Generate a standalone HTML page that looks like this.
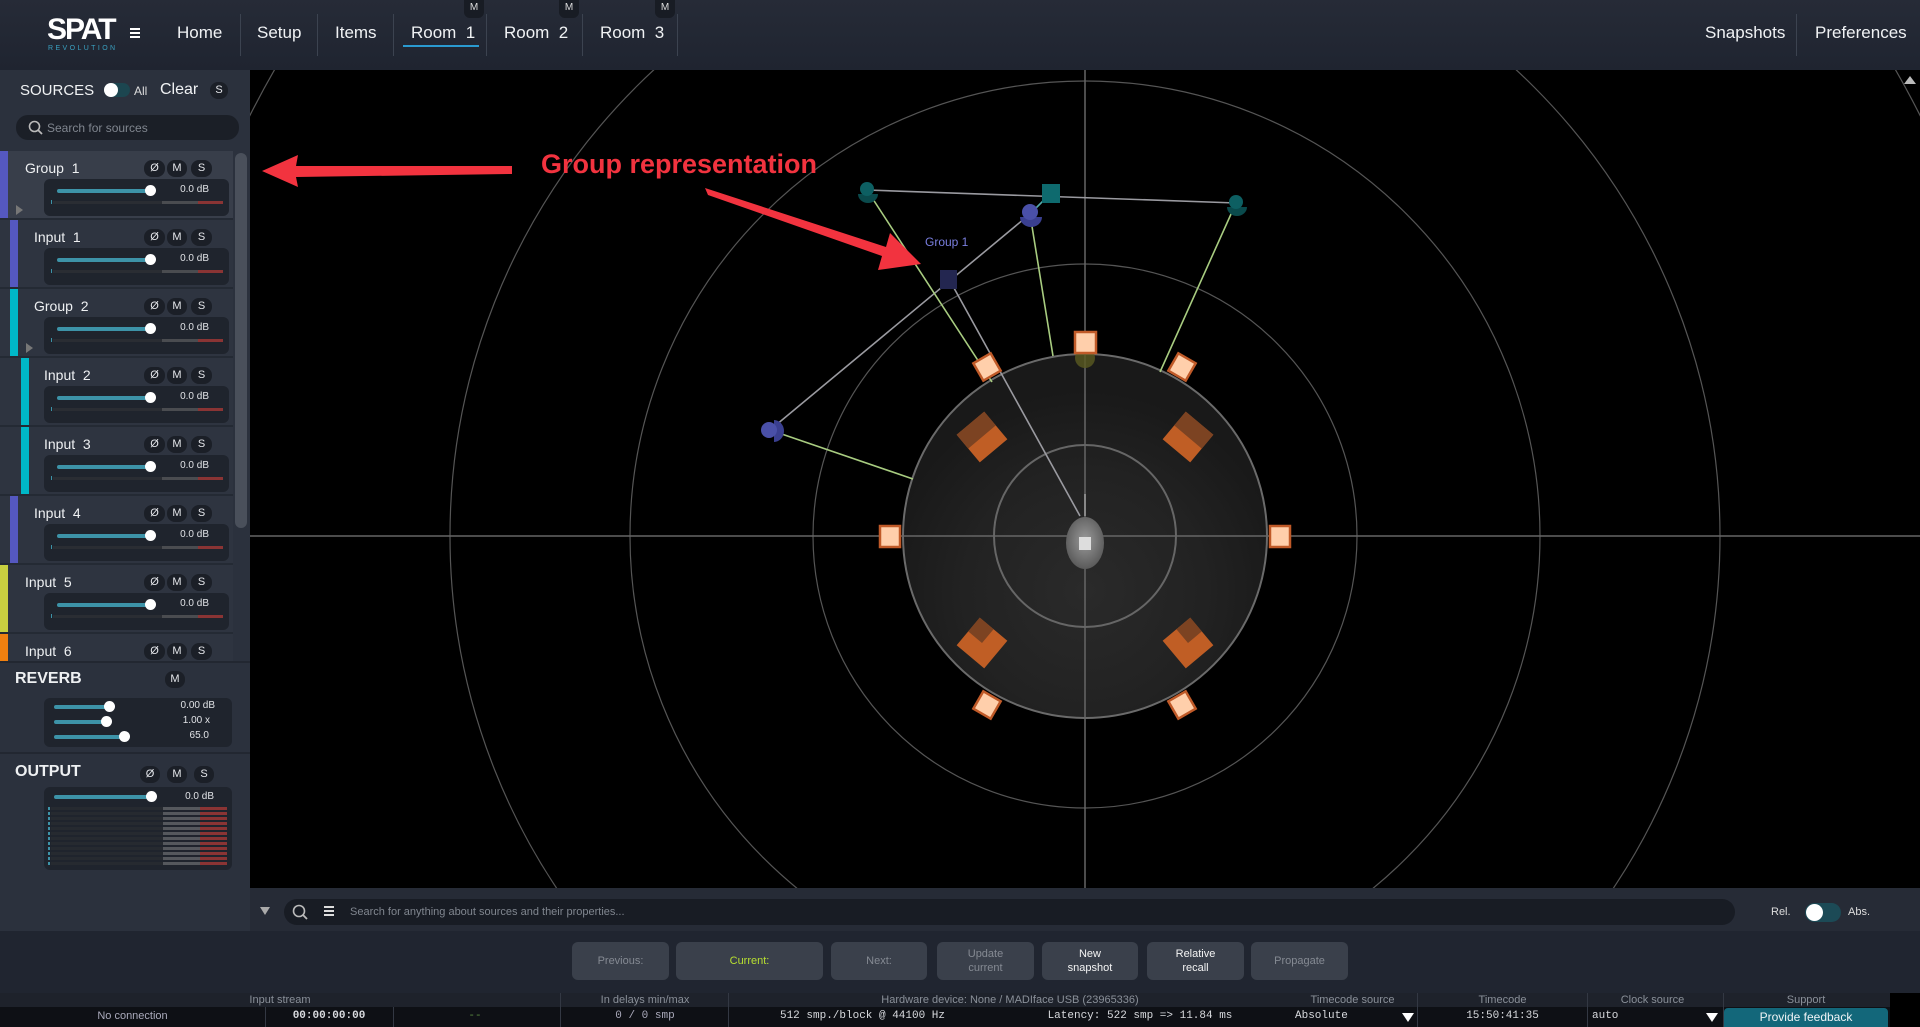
<!DOCTYPE html>
<html style="overflow:hidden"><head><meta charset="utf-8">
<style>
*{box-sizing:border-box;margin:0;padding:0}
html,body{width:1920px;height:1027px;overflow:hidden}
body{background:#000;font-family:"Liberation Sans",sans-serif;color:#e8eaee;position:relative}
.a{position:absolute}
.top{left:0;top:0;width:1920px;height:70px;background:linear-gradient(#262b37,#1f2430)}
.nav{position:absolute;top:23px;font-size:17px;color:#f0f2f4}
.div{position:absolute;top:14px;width:1px;height:42px;background:#3c4350}
.mb{position:absolute;top:0;width:20px;height:18px;border-radius:0 0 6px 6px;background:#181c24;font-size:10px;color:#ddd;text-align:center;line-height:16px}
.left{left:0;top:70px;width:250px;height:862px;background:#2b313d}
.row{position:absolute;left:0;width:233px;height:69px;background:#2e3440;border-bottom:2px solid #242a34}
.bar{position:absolute;top:0;width:8px;height:67px}
.nm{position:absolute;top:9px;font-size:14px;color:#eef0f2}
.bd{position:absolute;height:17px;border-radius:8px;background:#1b1f27;font-size:11px;color:#e4e6ea;text-align:center;line-height:17px}
.box{position:absolute;left:44px;top:28px;width:185px;height:37px;border-radius:6px;background:#1f242d}
.sl{position:absolute;height:4px;border-radius:2px;background:#3d93a8}
.kn{position:absolute;width:11px;height:11px;border-radius:50%;background:#fff}
.val{position:absolute;font-size:10px;color:#e0e2e6;text-align:right}
.btn{position:absolute;top:942px;height:38px;border-radius:6px;background:#3a404b;font-size:11px;color:#858a93;text-align:center;display:flex;align-items:center;justify-content:center;line-height:14px}
.hd{position:absolute;top:994px;font-size:11px;color:#8a9099;text-align:center;line-height:13px}
.vl{position:absolute;top:1010px;font-size:11px;line-height:13px;color:#d8dade;font-family:"Liberation Mono",monospace;text-align:center}
</style></head><body>

<svg class="a" style="left:0;top:0" width="1920" height="1027">
<defs>
<radialGradient id="rg" cx="50%" cy="65%" r="55%"><stop offset="0" stop-color="#2a2a2a"/><stop offset="0.6" stop-color="#222"/><stop offset="1" stop-color="#191919"/></radialGradient>
<radialGradient id="hg" cx="50%" cy="45%" r="55%"><stop offset="0" stop-color="#9a9a9a"/><stop offset="1" stop-color="#5a5a5a"/></radialGradient>
<clipPath id="cc"><rect x="250" y="70" width="1670" height="818"/></clipPath>
</defs>
<rect x="250" y="70" width="1670" height="818" fill="#000"/>
<g clip-path="url(#cc)" fill="none" stroke="#555" stroke-width="1.2">
<circle cx="1085" cy="536" r="182" fill="url(#rg)" stroke="#6a6a6a" stroke-width="2"/>
<circle cx="1085" cy="536" r="91" stroke="#666" stroke-width="2"/>
<circle cx="1085" cy="536" r="272"/>
<circle cx="1085" cy="536" r="455"/>
<circle cx="1085" cy="536" r="635"/>
<circle cx="1085" cy="536" r="935"/>
<line x1="250" y1="536" x2="1920" y2="536" stroke="#666" stroke-width="1.5"/>
<line x1="1085" y1="70" x2="1085" y2="888" stroke="#666" stroke-width="1.5"/>
</g>
<g stroke-width="1.6">
<line x1="867" y1="190" x2="1236" y2="203" stroke="#9a9aa0"/>
<line x1="1051" y1="193" x2="1030" y2="214" stroke="#5aa"/>
<line x1="1030" y1="214" x2="770" y2="430" stroke="#9a9aa0"/>
<line x1="949" y1="279" x2="1080" y2="516" stroke="#9a9aa0"/>
<line x1="867" y1="190" x2="992" y2="382" stroke="#a8cc80"/>
<line x1="1030" y1="214" x2="1053" y2="356" stroke="#a8cc80"/>
<line x1="1236" y1="203" x2="1160" y2="372" stroke="#a8cc80"/>
<line x1="770" y1="430" x2="913" y2="479" stroke="#a8cc80"/>
</g>
<circle cx="1085" cy="358" r="10" fill="#5a5a20" opacity="0.8"/>
<line x1="1085" y1="494" x2="1085" y2="516" stroke="#888" stroke-width="2"/>
<ellipse cx="1085" cy="543" rx="19" ry="26" fill="url(#hg)"/>
<rect x="1079" y="537" width="12" height="13" fill="#ddd"/>
<g>
<g transform="translate(982,437) rotate(-40)"><rect x="-18" y="-18" width="36" height="36" fill="#c05e25"/><rect x="-18" y="-18" width="36" height="18" fill="#7c4322"/></g>
<g transform="translate(1188,437) rotate(40)"><rect x="-18" y="-18" width="36" height="36" fill="#c05e25"/><rect x="-18" y="-18" width="36" height="18" fill="#7c4322"/></g>
<g transform="translate(982,643) rotate(40)"><rect x="-18" y="-18" width="36" height="36" fill="#c05e25"/><rect x="-18" y="-18" width="18" height="18" fill="#7c4322"/></g>
<g transform="translate(1188,643) rotate(-40)"><rect x="-18" y="-18" width="36" height="36" fill="#c05e25"/><rect x="0" y="-18" width="18" height="18" fill="#7c4322"/></g>
</g>
<g fill="#ffcfab" stroke="#c05a28" stroke-width="2.5">
<rect x="1075" y="332" width="21" height="21"/>
<rect x="880" y="526" width="20" height="21"/>
<rect x="1270" y="526" width="20" height="21"/>
<rect x="977" y="357" width="20" height="20" transform="rotate(-30 987 367)"/>
<rect x="1172" y="357" width="20" height="20" transform="rotate(30 1182 367)"/>
<rect x="977" y="695" width="20" height="20" transform="rotate(30 987 705)"/>
<rect x="1172" y="695" width="20" height="20" transform="rotate(-30 1182 705)"/>
</g>
<rect x="1042" y="184" width="18" height="19" fill="#0e6a6e"/>
<rect x="940" y="270" width="17" height="19" fill="#232650"/>
<g><path d="M858 194 a10 9 0 0 0 20 0 z" fill="#0a4a4c"/><circle cx="867" cy="189" r="7" fill="#0d5f62"/></g>
<g><path d="M1227 207 a10 9 0 0 0 20 0 z" fill="#0a4a4c"/><circle cx="1236" cy="202" r="7" fill="#0d5f62"/></g>
<g><path d="M1020 217 a11 10 0 0 0 22 0 z" fill="#3a3f90"/><circle cx="1030" cy="212" r="8" fill="#4a50a8"/></g>
<g><path d="M774 420 a10 11 0 0 1 0 22 z" fill="#3a3f90"/><circle cx="769" cy="430" r="8" fill="#4a50a8"/></g>
<text x="925" y="246" font-family="Liberation Sans" font-size="12" fill="#7a7fe0">Group  1</text>
<path d="M1904 84 l6 -8 l6 8z" fill="#bbb"/>
<text x="541" y="173" font-family="Liberation Sans" font-weight="bold" font-size="27" fill="#f2333f">Group representation</text>
<path d="M512 166 L296 166 L298 155 L262 171 L298 187 L296 177 L512 174 Z" fill="#f2333f"/>
<path d="M705 188 L708 195 L882 256 L878 270 L921 264 L890 233 L886 247 Z" fill="#f2333f"/>
</svg>

<div class="a top">
  <div class="a" style="left:47px;top:14px;font-size:30px;font-weight:bold;color:#fff;letter-spacing:-2px;line-height:32px">SPAT</div>
  <div class="a" style="left:48px;top:45px;font-size:7px;color:#3aa0c0;letter-spacing:2.4px">REVOLUTION</div>
  <div class="a" style="left:130px;top:28px;width:10px;height:2px;background:#fff;box-shadow:0 4px 0 #fff,0 8px 0 #fff"></div>
  <div class="nav" style="left:177px">Home</div>
  <div class="div" style="left:240px"></div>
  <div class="nav" style="left:257px">Setup</div>
  <div class="div" style="left:317px"></div>
  <div class="nav" style="left:335px">Items</div>
  <div class="div" style="left:393px"></div>
  <div class="nav" style="left:411px">Room&nbsp; 1</div>
  <div class="a" style="left:403px;top:45px;width:76px;height:2px;background:#2a9ad0"></div>
  <div class="div" style="left:486px"></div>
  <div class="nav" style="left:504px">Room&nbsp; 2</div>
  <div class="div" style="left:582px"></div>
  <div class="nav" style="left:600px">Room&nbsp; 3</div>
  <div class="div" style="left:677px"></div>
  <div class="mb" style="left:464px">M</div>
  <div class="mb" style="left:559px">M</div>
  <div class="mb" style="left:655px">M</div>
  <div class="nav" style="left:1705px">Snapshots</div>
  <div class="div" style="left:1796px"></div>
  <div class="nav" style="left:1815px">Preferences</div>
</div>

<div class="a left">
  <div class="a" style="left:20px;top:12px;font-size:15px;color:#f0f2f4">SOURCES</div>
  <div class="a" style="left:104px;top:13px;width:26px;height:14px;border-radius:7px;background:#1c4650"></div>
  <div class="a" style="left:104px;top:13px;width:14px;height:14px;border-radius:50%;background:#fff"></div>
  <div class="a" style="left:134px;top:14px;font-size:12px;color:#ddd">All</div>
  <div class="a" style="left:160px;top:11px;font-size:16px;color:#f0f2f4">Clear</div>
  <div class="bd" style="left:210px;top:12px;width:18px">S</div>
  <div class="a" style="left:16px;top:45px;width:223px;height:25px;border-radius:12px;background:#1b1f27"></div>
  <svg class="a" style="left:28px;top:50px" width="16" height="16"><circle cx="6.5" cy="6.5" r="5" fill="none" stroke="#bbb" stroke-width="1.6"/><line x1="10" y1="10" x2="14" y2="14" stroke="#bbb" stroke-width="1.8"/></svg>
  <div class="a" style="left:47px;top:51px;font-size:12px;color:#80868f">Search for sources</div>
  <div class="a" style="left:235px;top:83px;width:12px;height:375px;border-radius:6px;background:#4a505b"></div>
</div>

<div class="a" style="left:0;top:661px;width:250px;height:2px;background:#222731"></div>
<div class="a" style="left:15px;top:670px;font-size:16px;font-weight:bold;color:#eef0f2">REVERB</div>
<div class="bd" style="left:165px;top:671px;width:20px">M</div>
<div class="a" style="left:44px;top:698px;width:188px;height:49px;border-radius:6px;background:#1f242d"></div>
<div class="sl" style="left:54px;top:705px;width:56px"></div><div class="kn" style="left:104px;top:701px"></div>
<div class="sl" style="left:54px;top:720px;width:53px"></div><div class="kn" style="left:101px;top:716px"></div>
<div class="sl" style="left:54px;top:735px;width:71px"></div><div class="kn" style="left:119px;top:731px"></div>
<div class="val" style="left:150px;width:65px;top:700px">0.00 dB</div>
<div class="val" style="left:150px;width:60px;top:715px">1.00 x</div>
<div class="val" style="left:150px;width:59px;top:730px">65.0</div>
<div class="a" style="left:0;top:752px;width:250px;height:2px;background:#222731"></div>
<div class="a" style="left:15px;top:763px;font-size:16px;font-weight:bold;color:#eef0f2">OUTPUT</div>
<div class="bd" style="left:140px;top:766px;width:20px">Ø</div>
<div class="bd" style="left:167px;top:766px;width:20px">M</div>
<div class="bd" style="left:194px;top:766px;width:20px">S</div>
<div class="a" style="left:44px;top:787px;width:188px;height:83px;border-radius:6px;background:#1f242d"></div>
<div class="sl" style="left:54px;top:795px;width:97px"></div><div class="kn" style="left:146px;top:791px"></div>
<div class="val" style="left:150px;width:64px;top:791px">0.0 dB</div>
<div class="a" style="left:48px;top:807px;width:2px;height:58px;background:repeating-linear-gradient(#3d93a8 0 3px,transparent 3px 5px)"></div>
<div class="a" style="left:51px;top:807px;width:112px;height:58px;background:repeating-linear-gradient(#262a30 0 3px,#1f242d 3px 5px)"></div>
<div class="a" style="left:163px;top:807px;width:37px;height:58px;background:repeating-linear-gradient(#55585d 0 3px,#1f242d 3px 5px)"></div>
<div class="a" style="left:200px;top:807px;width:27px;height:58px;background:repeating-linear-gradient(#8a3434 0 3px,#1f242d 3px 5px)"></div>

<div class="a" style="left:250px;top:888px;width:1670px;height:43px;background:#262b36"></div>
<div class="a" style="left:0;top:931px;width:1920px;height:62px;background:#202530"></div>
<div class="a" style="left:284px;top:899px;width:1451px;height:26px;border-radius:13px;background:#181c24"></div>
<div class="a" style="left:260px;top:907px;width:0;height:0;border-left:5px solid transparent;border-right:5px solid transparent;border-top:8px solid #aaa"></div>
<svg class="a" style="left:292px;top:904px" width="18" height="18"><circle cx="7" cy="7" r="5.5" fill="none" stroke="#bbb" stroke-width="1.6"/><line x1="11" y1="11" x2="15" y2="15" stroke="#bbb" stroke-width="1.8"/></svg>
<div class="a" style="left:324px;top:906px;width:10px;height:2px;background:#ddd;box-shadow:0 4px 0 #ddd,0 8px 0 #ddd"></div>
<div class="a" style="left:350px;top:906px;font-size:11px;color:#80868f">Search for anything about sources and their properties...</div>
<div class="a" style="left:1771px;top:906px;font-size:11px;color:#ddd">Rel.</div>
<div class="a" style="left:1805px;top:903px;width:36px;height:19px;border-radius:10px;background:#1c4a56"></div>
<div class="a" style="left:1806px;top:904px;width:17px;height:17px;border-radius:50%;background:#fff"></div>
<div class="a" style="left:1848px;top:906px;font-size:11px;color:#ddd">Abs.</div>

<div class="btn" style="left:572px;width:97px">Previous:</div>
<div class="btn" style="left:676px;width:147px;color:#b8e030">Current:</div>
<div class="btn" style="left:831px;width:96px">Next:</div>
<div class="btn" style="left:937px;width:97px">Update<br>current</div>
<div class="btn" style="left:1042px;width:96px;color:#f4f4f4">New<br>snapshot</div>
<div class="btn" style="left:1147px;width:97px;color:#f4f4f4">Relative<br>recall</div>
<div class="btn" style="left:1251px;width:97px">Propagate</div>

<div class="a" style="left:0;top:993px;width:1890px;height:34px;background:#1e222b"></div>
<div class="a" style="left:0;top:1007px;width:1890px;height:20px;background:#0e1015"></div>
<div class="hd" style="left:180px;width:200px">Input stream</div>
<div class="hd" style="left:560px;width:170px">In delays min/max</div>
<div class="hd" style="left:820px;width:380px">Hardware device: None / MADIface USB (23965336)</div>
<div class="hd" style="left:1290px;width:125px">Timecode source</div>
<div class="hd" style="left:1420px;width:165px">Timecode</div>
<div class="hd" style="left:1590px;width:125px">Clock source</div>
<div class="hd" style="left:1724px;width:164px">Support</div>
<div class="a" style="left:265px;top:1007px;width:1px;height:20px;background:#333843"></div>
<div class="a" style="left:393px;top:1007px;width:1px;height:20px;background:#333843"></div>
<div class="a" style="left:560px;top:993px;width:1px;height:34px;background:#333843"></div>
<div class="a" style="left:728px;top:993px;width:1px;height:34px;background:#333843"></div>
<div class="a" style="left:1417px;top:993px;width:1px;height:34px;background:#333843"></div>
<div class="a" style="left:1587px;top:993px;width:1px;height:34px;background:#333843"></div>
<div class="a" style="left:1723px;top:993px;width:1px;height:34px;background:#333843"></div>
<div class="vl" style="left:60px;width:145px;font-family:'Liberation Sans';color:#aab">No connection</div>
<div class="vl" style="left:270px;width:118px;font-weight:bold">00:00:00:00</div>
<div class="vl" style="left:440px;width:70px;color:#5a8a40">--</div>
<div class="vl" style="left:580px;width:130px;color:#aab">0 / 0 smp</div>
<div class="vl" style="left:740px;width:245px">512 smp./block @ 44100 Hz</div>
<div class="vl" style="left:1010px;width:260px">Latency: 522 smp =&gt; 11.84 ms</div>
<div class="vl" style="left:1295px;width:60px;text-align:left">Absolute</div>
<div class="a" style="left:1402px;top:1013px;border-left:6px solid transparent;border-right:6px solid transparent;border-top:9px solid #fff"></div>
<div class="vl" style="left:1420px;width:165px">15:50:41:35</div>
<div class="vl" style="left:1592px;width:60px;text-align:left">auto</div>
<div class="a" style="left:1706px;top:1013px;border-left:6px solid transparent;border-right:6px solid transparent;border-top:9px solid #fff"></div>
<div class="a" style="left:1724px;top:1008px;width:164px;height:19px;border-radius:4px 4px 0 0;background:#13677a;font-size:12px;color:#f0f4f6;text-align:center;line-height:19px">Provide feedback</div>

<div class="row" style="top:151px;background:#383e4a"><div class="bar" style="left:0;background:#5558c0"></div><div class="nm" style="left:25px">Group&nbsp; 1</div>
<div class="bd" style="left:144px;top:9px;width:21px">Ø</div><div class="bd" style="left:167px;top:9px;width:20px">M</div><div class="bd" style="left:191px;top:9px;width:21px">S</div>
<div class="box"><div class="sl" style="left:13px;top:10px;width:93px"></div><div class="kn" style="left:101px;top:6px"></div><div class="val" style="left:100px;width:65px;top:5px">0.0 dB</div><div class="a" style="left:7px;top:21px;width:1px;height:4px;background:#3d93a8"></div><div class="a" style="left:9px;top:22px;width:109px;height:3px;background:#2a2d33"></div><div class="a" style="left:118px;top:22px;width:36px;height:3px;background:#4a4c50"></div><div class="a" style="left:154px;top:22px;width:25px;height:3px;background:#8a3434"></div></div>
<div class="a" style="left:16px;top:54px;border-top:5px solid transparent;border-bottom:5px solid transparent;border-left:7px solid #777"></div></div>

<div class="row" style="top:220px"><div class="bar" style="left:10px;background:#5558c0"></div><div class="nm" style="left:34px">Input&nbsp; 1</div>
<div class="bd" style="left:144px;top:9px;width:21px">Ø</div><div class="bd" style="left:167px;top:9px;width:20px">M</div><div class="bd" style="left:191px;top:9px;width:21px">S</div>
<div class="box"><div class="sl" style="left:13px;top:10px;width:93px"></div><div class="kn" style="left:101px;top:6px"></div><div class="val" style="left:100px;width:65px;top:5px">0.0 dB</div><div class="a" style="left:7px;top:21px;width:1px;height:4px;background:#3d93a8"></div><div class="a" style="left:9px;top:22px;width:109px;height:3px;background:#2a2d33"></div><div class="a" style="left:118px;top:22px;width:36px;height:3px;background:#4a4c50"></div><div class="a" style="left:154px;top:22px;width:25px;height:3px;background:#8a3434"></div></div></div>

<div class="row" style="top:289px"><div class="bar" style="left:10px;background:#00b8c8"></div><div class="nm" style="left:34px">Group&nbsp; 2</div>
<div class="bd" style="left:144px;top:9px;width:21px">Ø</div><div class="bd" style="left:167px;top:9px;width:20px">M</div><div class="bd" style="left:191px;top:9px;width:21px">S</div>
<div class="box"><div class="sl" style="left:13px;top:10px;width:93px"></div><div class="kn" style="left:101px;top:6px"></div><div class="val" style="left:100px;width:65px;top:5px">0.0 dB</div><div class="a" style="left:7px;top:21px;width:1px;height:4px;background:#3d93a8"></div><div class="a" style="left:9px;top:22px;width:109px;height:3px;background:#2a2d33"></div><div class="a" style="left:118px;top:22px;width:36px;height:3px;background:#4a4c50"></div><div class="a" style="left:154px;top:22px;width:25px;height:3px;background:#8a3434"></div></div>
<div class="a" style="left:26px;top:54px;border-top:5px solid transparent;border-bottom:5px solid transparent;border-left:7px solid #777"></div></div>

<div class="row" style="top:358px"><div class="bar" style="left:21px;background:#00b8c8"></div><div class="nm" style="left:44px">Input&nbsp; 2</div>
<div class="bd" style="left:144px;top:9px;width:21px">Ø</div><div class="bd" style="left:167px;top:9px;width:20px">M</div><div class="bd" style="left:191px;top:9px;width:21px">S</div>
<div class="box"><div class="sl" style="left:13px;top:10px;width:93px"></div><div class="kn" style="left:101px;top:6px"></div><div class="val" style="left:100px;width:65px;top:5px">0.0 dB</div><div class="a" style="left:7px;top:21px;width:1px;height:4px;background:#3d93a8"></div><div class="a" style="left:9px;top:22px;width:109px;height:3px;background:#2a2d33"></div><div class="a" style="left:118px;top:22px;width:36px;height:3px;background:#4a4c50"></div><div class="a" style="left:154px;top:22px;width:25px;height:3px;background:#8a3434"></div></div></div>

<div class="row" style="top:427px"><div class="bar" style="left:21px;background:#00b8c8"></div><div class="nm" style="left:44px">Input&nbsp; 3</div>
<div class="bd" style="left:144px;top:9px;width:21px">Ø</div><div class="bd" style="left:167px;top:9px;width:20px">M</div><div class="bd" style="left:191px;top:9px;width:21px">S</div>
<div class="box"><div class="sl" style="left:13px;top:10px;width:93px"></div><div class="kn" style="left:101px;top:6px"></div><div class="val" style="left:100px;width:65px;top:5px">0.0 dB</div><div class="a" style="left:7px;top:21px;width:1px;height:4px;background:#3d93a8"></div><div class="a" style="left:9px;top:22px;width:109px;height:3px;background:#2a2d33"></div><div class="a" style="left:118px;top:22px;width:36px;height:3px;background:#4a4c50"></div><div class="a" style="left:154px;top:22px;width:25px;height:3px;background:#8a3434"></div></div></div>

<div class="row" style="top:496px"><div class="bar" style="left:10px;background:#5558c0"></div><div class="nm" style="left:34px">Input&nbsp; 4</div>
<div class="bd" style="left:144px;top:9px;width:21px">Ø</div><div class="bd" style="left:167px;top:9px;width:20px">M</div><div class="bd" style="left:191px;top:9px;width:21px">S</div>
<div class="box"><div class="sl" style="left:13px;top:10px;width:93px"></div><div class="kn" style="left:101px;top:6px"></div><div class="val" style="left:100px;width:65px;top:5px">0.0 dB</div><div class="a" style="left:7px;top:21px;width:1px;height:4px;background:#3d93a8"></div><div class="a" style="left:9px;top:22px;width:109px;height:3px;background:#2a2d33"></div><div class="a" style="left:118px;top:22px;width:36px;height:3px;background:#4a4c50"></div><div class="a" style="left:154px;top:22px;width:25px;height:3px;background:#8a3434"></div></div></div>

<div class="row" style="top:565px"><div class="bar" style="left:0;background:#c8d040"></div><div class="nm" style="left:25px">Input&nbsp; 5</div>
<div class="bd" style="left:144px;top:9px;width:21px">Ø</div><div class="bd" style="left:167px;top:9px;width:20px">M</div><div class="bd" style="left:191px;top:9px;width:21px">S</div>
<div class="box"><div class="sl" style="left:13px;top:10px;width:93px"></div><div class="kn" style="left:101px;top:6px"></div><div class="val" style="left:100px;width:65px;top:5px">0.0 dB</div><div class="a" style="left:7px;top:21px;width:1px;height:4px;background:#3d93a8"></div><div class="a" style="left:9px;top:22px;width:109px;height:3px;background:#2a2d33"></div><div class="a" style="left:118px;top:22px;width:36px;height:3px;background:#4a4c50"></div><div class="a" style="left:154px;top:22px;width:25px;height:3px;background:#8a3434"></div></div></div>

<div class="row" style="top:634px;height:27px;border-bottom:0"><div class="bar" style="left:0;height:27px;background:#f08010"></div><div class="nm" style="left:25px">Input&nbsp; 6</div>
<div class="bd" style="left:144px;top:9px;width:21px">Ø</div><div class="bd" style="left:167px;top:9px;width:20px">M</div><div class="bd" style="left:191px;top:9px;width:21px">S</div></div>

</body></html>
